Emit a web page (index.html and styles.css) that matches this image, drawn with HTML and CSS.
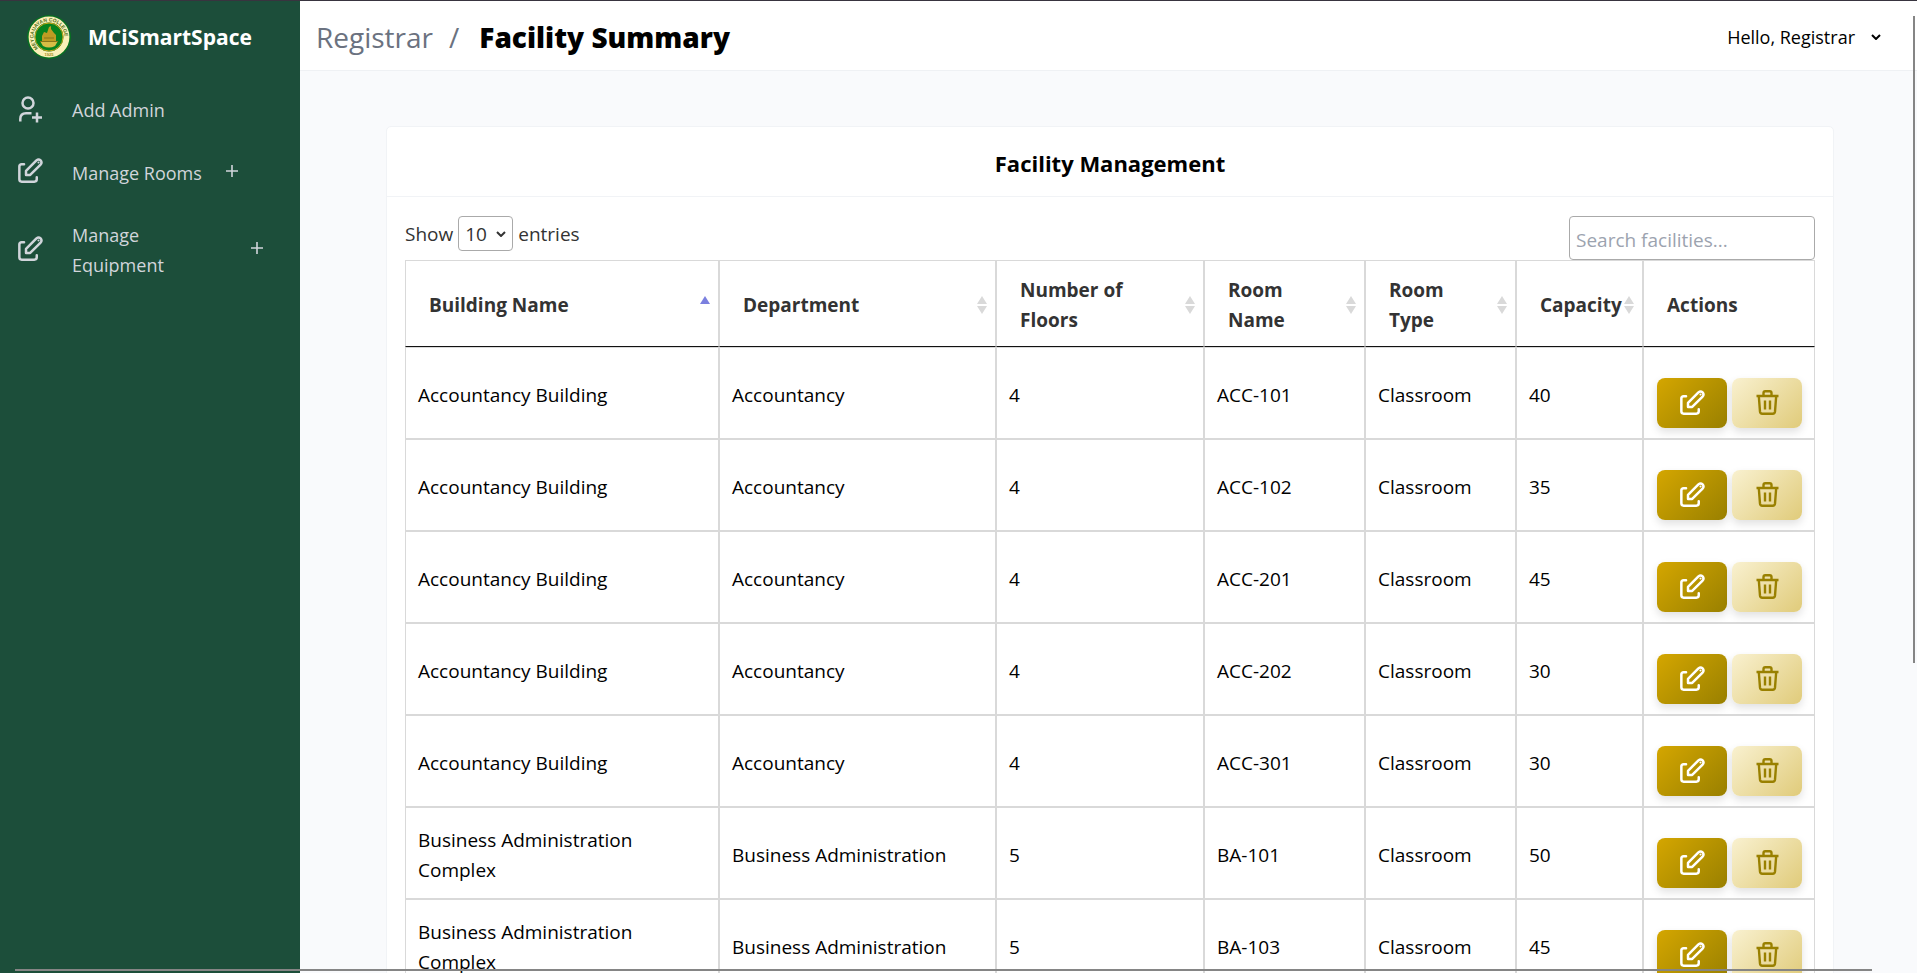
FILE: index.html
```html
<!DOCTYPE html>
<html lang="en">
<head>
<meta charset="utf-8">
<title>Facility Summary</title>
<link rel="stylesheet" href="styles.css">
</head>
<body>
<svg class="defs" aria-hidden="true">
  <symbol id="edit" viewBox="0 0 24 24">
    <g fill="none" stroke="currentColor" stroke-width="2.400" stroke-linejoin="round" stroke-linecap="round">
      <path d="M5.800 6H3.500Q1.300 6 1.300 8.200V20.500Q1.300 22.700 3.500 22.700H15.700Q18 22.700 18 20.500V18.500"/>
      <path d="M7.700 16.300V12.300L17.700 2.300Q19.800 .6 21.700 2.300Q23.400 4.200 21.700 6.300L11.700 16.300Z"/>
    </g>
    <circle cx="19.700" cy="4.300" r="1" fill="currentColor"/>
  </symbol>
  <symbol id="trash" viewBox="0 0 22 25">
    <g fill="none" stroke="currentColor" stroke-width="2.400" stroke-linejoin="round">
      <path d="M0 6H22M7 6V3Q7 1.300 8.800 1.300H13.200Q15 1.300 15 3V6"/>
      <path d="M2.300 6L3.500 21.700Q3.700 23.700 5.700 23.700H16.300Q18.300 23.700 18.500 21.700L19.700 6"/>
      <path d="M8.500 10.500V19.500M13.500 10.500V19.500"/>
    </g>
  </symbol>
  <symbol id="user-add" viewBox="0 0 23 27">
    <g fill="none" stroke="currentColor" stroke-width="2.500">
      <circle cx="9" cy="7" r="5.500"/>
      <path d="M1.300 25.500V23Q1.300 17.200 7 17.200H12.500M18 16.500V26.500M13 21.500H23"/>
    </g>
  </symbol>
</svg>
<div class="app">
  <aside class="sidebar">
    <div class="brand">
      <svg class="logo" viewBox="0 0 44 44" aria-hidden="true">
        <defs><path id="ring" d="M11.400 33.200A15.500 15.500 0 1 1 32.600 33.200"/></defs>
        <circle cx="22" cy="22" r="22" fill="#087021"/>
        <circle cx="22" cy="22" r="17.400" fill="none" stroke="#fbf0b8" stroke-width="6"/>
        <circle cx="22" cy="22" r="14" fill="#07821f" stroke="#c9a91c" stroke-width="1"/>
        <text class="seal-text"><textPath href="#ring">MEYCAUAYAN COLLEGE</textPath></text>
        <text class="seal-year" x="22" y="41" text-anchor="middle">1925</text>
        <path d="M15 27V21L17 17L20 18L22 12L24 11L24 14L27 18L29 20V26Z" fill="#bd9c23"/>
        <path d="M13 26H31L28 31Q22 34 16 31Z" fill="#d7bd45"/>
        <path d="M13 26.500H31M17 23H27" stroke="#87761a" stroke-width="1"/>
      </svg>
      <span class="brand-name">MCiSmartSpace</span>
    </div>
    <nav class="nav">
      <a class="nav-item" href="#"><svg class="nav-icon user"><use href="#user-add"/></svg><span>Add Admin</span></a>
      <a class="nav-item" href="#"><svg class="nav-icon"><use href="#edit"/></svg><span>Manage Rooms</span><svg class="plus" viewBox="0 0 12 12"><path d="M6 0V12M0 6H12"/></svg></a>
      <a class="nav-item tall" href="#"><svg class="nav-icon"><use href="#edit"/></svg><span class="grow">Manage Equipment</span><svg class="plus" viewBox="0 0 12 12"><path d="M6 0V12M0 6H12"/></svg></a>
    </nav>
  </aside>
  <div class="main">
    <header class="topbar">
      <h1 class="crumbs"><span class="crumb">Registrar</span><span class="crumb">/</span><span class="current">Facility Summary</span></h1>
      <button class="account" type="button">Hello, Registrar <svg class="chevron" viewBox="0 0 10 6"><path d="M1 1L5 5L9 1"/></svg></button>
    </header>
    <main class="content">
      <section class="card">
        <h2 class="card-title">Facility Management</h2>
        <div class="card-body">
          <div class="controls">
            <label class="length">Show
              <span class="select-wrap"><select><option>10</option><option>25</option><option>50</option></select><svg class="chevron" viewBox="0 0 10 6"><path d="M1 1L5 5L9 1"/></svg></span>
              entries</label>
            <input class="search" type="search" placeholder="Search facilities..." aria-label="Search facilities">
          </div>
          <table class="grid">
            <colgroup><col class="c-building"><col class="c-dept"><col class="c-floors"><col class="c-room"><col class="c-type"><col class="c-cap"><col class="c-act"></colgroup>
            <thead><tr>
              <th class="sort asc">Building Name</th><th class="sort">Department</th><th class="sort">Number of Floors</th><th class="sort">Room Name</th><th class="sort">Room Type</th><th class="sort">Capacity</th><th>Actions</th>
            </tr></thead>
            <tbody id="rows"></tbody>
          </table>
        </div>
      </section>
    </main>
  </div>
  <div class="scroll-y"></div>
  <div class="scroll-x"></div>
</div>
<script src="rows.js"></script>
</body>
</html>
```
FILE: styles.css
```css
* { box-sizing: border-box; }
body {
  margin: 0;
  font-family: "Open Sans", "Noto Sans", sans-serif;
  font-size: 19px;
  line-height: 30px;
  color: #000;
  background: #f9fafc;
}
button, input, select { font: inherit; color: inherit; margin: 0; }
.defs { position: absolute; width: 0; height: 0; }
.app {
  position: relative;
  display: flex;
  height: 100vh;
  overflow: hidden;
  border-top: 1px solid #38343f;
}

.sidebar { flex: 0 0 300px; background: #1c4e3a; color: #d1d5db; }
.brand { display: flex; align-items: center; gap: 17px; height: 71px; padding-left: 27px; }
.logo { width: 44px; height: 44px; flex: none; }
.seal-text { font: bold 5px "Liberation Sans", sans-serif; fill: #4b6b14; }
.seal-year { font: bold 4px "Liberation Sans", sans-serif; fill: #a08a20; }
.brand-name { font-size: 21px; font-weight: 700; color: #fff; }
.nav { display: flex; flex-direction: column; padding-top: 6px; font-size: 18px; }
.nav-item {
  display: flex;
  align-items: center;
  min-height: 63px;
  padding: 0 37px 0 18px;
  color: inherit;
  text-decoration: none;
}
.nav-item.tall { min-height: 92px; }
.nav-icon { width: 25px; height: 25px; margin: 0 29px 4px 0; flex: none; }
.nav-icon.user { height: 27px; margin-bottom: 0; }
.grow { flex: 1; padding-right: 30px; }
.plus { width: 12px; height: 12px; margin: 0 0 4px 24px; flex: none; fill: none; stroke: currentColor; stroke-width: 1.600; }

.main { flex: 1; min-width: 0; }
.topbar {
  display: flex;
  align-items: center;
  justify-content: space-between;
  height: 70px;
  padding: 2px 36px 0 16px;
  background: #fff;
  border-bottom: 1px solid #eff1f4;
}
.crumbs { display: flex; gap: 16px; margin: 0; font-size: 28px; font-weight: 400; }
.crumb { color: #6b7280; }
.current { font-weight: 800; margin-left: 4px; }
.account {
  display: flex;
  align-items: center;
  gap: 16px;
  padding: 0;
  border: 0;
  background: none;
  font-size: 18px;
}
.chevron { width: 10px; height: 6px; fill: none; stroke: currentColor; stroke-width: 2; }
.content { padding: 55px 83px 0 86px; }
.card { background: #fff; border: 1px solid #f1f3f6; border-radius: 5px; }
.card-title {
  margin: 0;
  padding: 21px 0 18px;
  border-bottom: 1px solid #f1f3f6;
  font-size: 22px;
  font-weight: 700;
  text-align: center;
}
.card-body { padding: 19px 18px; }
.controls { display: flex; justify-content: space-between; align-items: flex-start; color: #333; }
.length { display: flex; align-items: center; gap: 5px; height: 35px; }
.select-wrap { position: relative; display: flex; }
.select-wrap select {
  width: 55px;
  height: 35px;
  padding: 0 0 0 6px;
  border: 1px solid #aaa;
  border-radius: 4px;
  background: #fff;
  appearance: none;
}
.select-wrap .chevron { position: absolute; right: 7px; top: 15px; pointer-events: none; }
.search {
  width: 246px;
  height: 44px;
  padding: 4px 6px 0;
  border: 1px solid #aaa;
  border-radius: 4px;
  background: #fff;
}
.search::placeholder { color: #9ca3af; opacity: 1; }

.grid { width: 100%; table-layout: fixed; border-collapse: separate; border-spacing: 0; }
.c-building { width: auto; }
.c-dept { width: 277px; }
.c-floors { width: 208px; }
.c-room { width: 161px; }
.c-type { width: 151px; }
.c-cap { width: 127px; }
.c-act { width: 172px; }
.grid th, .grid td { border: 1px solid #d9d9d9; text-align: left; vertical-align: middle; }
.grid th {
  position: relative;
  height: 87px;
  padding: 13px 26px 11px 23px;
  border-bottom-color: #111;
  color: #333;
  font-weight: 700;
}
.grid td { height: 92px; padding: 12px 12px 9px; }
.sort::before, .sort::after {
  content: "";
  position: absolute;
  right: 8px;
  border: 5px solid transparent;
}
.sort::before { bottom: 50%; border-top-width: 0; border-bottom: 8px solid #d9d9d9; }
.sort::after { top: 50%; margin-top: 2px; border-bottom-width: 0; border-top: 8px solid #d9d9d9; }
.asc::before { border-bottom-color: #7b80df; }
.asc::after { display: none; }
.grid td.actions { padding: 30px 0 10px 13px; }
.buttons { display: flex; gap: 5px; }
.btn {
  display: flex;
  align-items: center;
  justify-content: center;
  width: 70px;
  height: 50px;
  padding: 0 0 2px;
  border: 0;
  border-radius: 8px;
  box-shadow: 0 4px 8px rgba(0, 0, 0, .12);
}
.btn svg { width: 25px; height: 25px; }
.btn.edit { color: #fff; background: linear-gradient(135deg, #d4a600, #998000); }
.btn.delete { color: #998000; background: linear-gradient(135deg, #f9f1d0, #e0cb7a); }

.scroll-y, .scroll-x { position: absolute; background: #858585; }
.scroll-y { right: 2px; top: 15px; width: 2px; height: 66.600%; }
.scroll-x { left: 15px; right: 45px; bottom: 2px; height: 2px; }
```
FILE: rows.js
```js
const facilities = [
  ["Accountancy Building", "Accountancy", 4, "ACC-101", "Classroom", 40],
  ["Accountancy Building", "Accountancy", 4, "ACC-102", "Classroom", 35],
  ["Accountancy Building", "Accountancy", 4, "ACC-201", "Classroom", 45],
  ["Accountancy Building", "Accountancy", 4, "ACC-202", "Classroom", 30],
  ["Accountancy Building", "Accountancy", 4, "ACC-301", "Classroom", 30],
  ["Business Administration Complex", "Business Administration", 5, "BA-101", "Classroom", 50],
  ["Business Administration Complex", "Business Administration", 5, "BA-103", "Classroom", 45]
];
document.getElementById("rows").innerHTML = facilities.map(row =>
  `<tr>${row.map(value => `<td>${value}</td>`).join("")}<td class="actions"><div class="buttons">
    <button class="btn edit" type="button" aria-label="Edit"><svg><use href="#edit"/></svg></button>
    <button class="btn delete" type="button" aria-label="Delete"><svg><use href="#trash"/></svg></button>
  </div></td></tr>`).join("");
```
